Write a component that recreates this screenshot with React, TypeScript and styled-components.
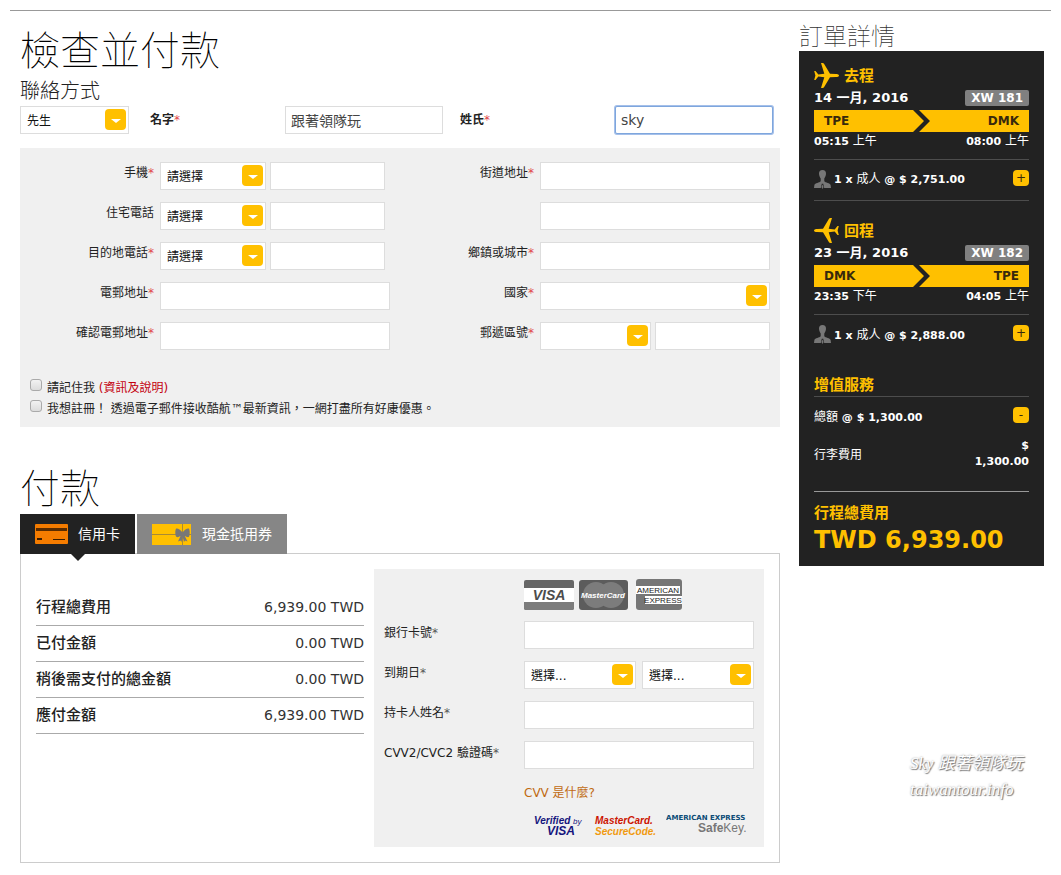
import React, { ReactNode } from "react";
import styled, { createGlobalStyle, css } from "styled-components";

const cjk = `"Noto Sans CJK TC", sans-serif`;
const wide = `"DejaVu Sans", ${cjk}`;
const yellow = "#ffc000";

const GlobalStyle = createGlobalStyle`
  *, *::before, *::after { box-sizing: border-box; }
  body {
    margin: 0;
    background: #fff;
    color: #222;
    font: 12px/20px ${wide};
  }
  h1, h2, h3, p { margin: 0; padding: 0; }
  button, input, select { font: inherit; color: inherit; }
  a { text-decoration: none; }
`;

/* ---------- page frame ---------- */

const Page = styled.div`
  padding: 10px 10px 12px;
`;
const Columns = styled.div`
  display: flex;
  align-items: flex-start;
  gap: 19px;
  padding: 12px 7px 0 10px;
  border-top: 1px solid #999;
`;
const Main = styled.main`
  flex: 1;
  min-width: 0;
`;
const Aside = styled.aside`
  flex: 0 0 245px;
`;
const PageTitle = styled.h1`
  padding-bottom: 3px;
  color: #000;
  font: 100 40px/50px ${cjk};
`;
const SubTitle = styled.h2`
  font: 300 20px/28px ${cjk};
`;
const AsideTitle = styled.h2`
  padding-bottom: 4px;
  font: 100 24px/24px ${cjk};
  color: #333;
`;

/* ---------- form controls ---------- */

const Input = styled.input<{ $grow?: boolean; $active?: boolean }>`
  height: 28px;
  width: ${(p) => (p.$grow ? "auto" : "100%")};
  flex: ${(p) => (p.$grow ? "1" : "0 1 auto")};
  min-width: 0;
  padding: 0 5px;
  border: 1px solid #ddd;
  background: #fff;
  color: #444;
  outline: none;
  ${(p) =>
    p.$active &&
    css`
      border-color: #7ea6dd;
      border-radius: 2px;
      box-shadow: 0 0 0 1px #a5c0ea;
    `}
`;
const SelectBox = styled.span<{ $width: string }>`
  position: relative;
  display: block;
  width: ${(p) => p.$width};
  flex: none;
  height: 28px;
`;
const NativeSelect = styled.select`
  appearance: none;
  width: 100%;
  height: 28px;
  padding: 1px 28px 0 6px;
  border: 1px solid #ddd;
  border-radius: 0;
  background: #fff;
  color: #111;
  font-size: 12px;
`;
const Caret = styled.span`
  position: absolute;
  top: 3px;
  right: 3px;
  width: 21px;
  height: 21px;
  border-radius: 4px;
  background: ${yellow};
  pointer-events: none;
  &::after {
    content: "";
    position: absolute;
    left: 6px;
    top: 10px;
    border: 5px solid transparent;
    border-top: 4px solid #fff;
    border-bottom: 0;
  }
`;
function Select({ id, label, width, value = "" }: { id: string; label?: string; width: string; value?: string }) {
  return (
    <SelectBox $width={width}>
      <NativeSelect id={id} aria-label={label} defaultValue={value}>
        <option value={value}>{value}</option>
      </NativeSelect>
      <Caret />
    </SelectBox>
  );
}

const Star = styled.span<{ $red?: boolean }>`
  color: ${(p) => (p.$red ? "#e0454a" : "#555")};
  font-weight: 400;
`;

/* ---------- passenger name row ---------- */

const NameGrid = styled.div`
  display: grid;
  grid-template-columns: 109px 156px 158px 172px 158px;
  align-items: center;
  padding-top: 2px;
  font-size: 14px;
`;
const NameLabel = styled.label<{ $indent: number }>`
  padding-left: ${(p) => p.$indent}px;
  font-size: 12px;
  font-weight: 700;
`;

/* ---------- contact panel ---------- */

const ContactPanel = styled.section`
  margin-top: 14px;
  padding: 14px 10px 7px 0;
  background: #f0f0f0;
`;
const ContactColumns = styled.div`
  display: flex;
  justify-content: space-between;
`;
const FieldColumn = styled.div`
  display: grid;
  grid-template-columns: 134px 230px;
  column-gap: 6px;
  row-gap: 12px;
`;
const FieldLabel = styled.label`
  padding-top: 1px;
  text-align: right;
`;
const FieldRow = styled.div`
  display: flex;
  gap: 4px;
  width: 230px;
`;
const PhoneInput = styled(Input)`
  width: 115px;
`;
const Checks = styled.div`
  padding: 28px 0 0 10px;
`;
const CheckLine = styled.label`
  display: flex;
  align-items: flex-start;
  gap: 4px;
  line-height: 21px;
`;
const CheckInput = styled.input`
  appearance: none;
  flex: none;
  width: 12px;
  height: 12px;
  margin: 1px 1px 0 0;
  border: 1px solid #aaa;
  border-radius: 3px;
  background: linear-gradient(#f2f2f2, #dcdcdc);
`;
const InfoLink = styled.a`
  color: #c4000f;
`;

/* ---------- payment ---------- */

const PayTitle = styled(PageTitle)`
  margin-top: 34px;
`;
const Tabs = styled.div`
  display: flex;
  gap: 2px;
`;
const Tab = styled.button<{ $active?: boolean }>`
  position: relative;
  display: flex;
  align-items: center;
  gap: 10px;
  height: 40px;
  padding: 0 15px;
  border: 0;
  background: ${(p) => (p.$active ? "#222" : "#868686")};
  color: #fff;
  font-size: 14px;
  line-height: 20px;
  ${(p) =>
    p.$active &&
    css`
      &::after {
        content: "";
        position: absolute;
        z-index: 1;
        top: 100%;
        left: 50%;
        margin-left: -7px;
        border: 7px solid transparent;
        border-top-color: #222;
        border-bottom: 0;
      }
    `}
`;
const PayPanel = styled.div`
  display: flex;
  align-items: flex-start;
  gap: 10px;
  margin-top: -1px;
  padding: 15px;
  border: 1px solid #ccc;
`;
const Costs = styled.table`
  flex: 1;
  margin-top: 20px;
  border-collapse: collapse;
  line-height: 20px;
  th, td { height: 36px; padding: 0; border-bottom: 1px solid #aaa; }
  th { text-align: left; font-size: 15px; font-weight: 500; }
  td { text-align: right; font-size: 14px; color: #333; }
`;
const CardBox = styled.div`
  flex: 0 0 390px;
  padding: 10px;
  background: #f0f0f0;
`;
const CardGrid = styled.div`
  display: grid;
  grid-template-columns: 140px 230px;
  row-gap: 12px;
  margin-top: 11px;
`;
const CardLabel = styled.label`
  padding-top: 2px;
`;
const Pair = styled.div`
  display: flex;
  justify-content: space-between;
`;
const CardLogos = styled.div`
  display: flex;
  gap: 5px;
  margin-left: 140px;
`;
const CvvLink = styled.a`
  display: block;
  margin: 14px 0 0 140px;
  color: #c06a10;
`;
const SecureLogos = styled.div`
  display: flex;
  gap: 10px;
  height: 23px;
  margin: 11px 0 0 150px;
`;

/* ---------- itinerary ---------- */

const Order = styled.div`
  padding: 11px 15px 10px;
  background: #222;
  color: #fff;
  font: 700 11px/16px ${wide};
`;
const Leg = styled.section`
  height: 155px;
`;
const LegHead = styled.h3`
  display: flex;
  align-items: center;
  gap: 5px;
  height: 26px;
  color: ${yellow};
  font: 700 15px/24px ${cjk};
`;
const Split = styled.div`
  display: flex;
  justify-content: space-between;
  align-items: center;
`;
const DateRow = styled(Split)`
  height: 18px;
  margin-top: 1px;
  font-size: 13px;
`;
const FlightNo = styled.span`
  padding: 0 6px;
  border-radius: 2px;
  background: #808080;
  font-size: 12px;
`;
const Route = styled(Split)`
  position: relative;
  height: 22px;
  margin-top: 3px;
  padding: 0 10px;
  background: ${yellow};
  color: #38290c;
  font-size: 12px;
`;
const Chevron = styled.svg`
  position: absolute;
  top: 0;
  left: 99px;
`;
const Light = styled.span`
  font: 400 12px/16px ${cjk};
`;
const Pax = styled(Split)<{ $last?: boolean }>`
  height: 42px;
  margin-top: 9px;
  padding-bottom: 2px;
  border-top: 1px solid #4d4d4d;
  border-bottom: ${(p) => (p.$last ? "0" : "1px solid #4d4d4d")};
`;
const PaxText = styled.span`
  display: flex;
  align-items: center;
  gap: 3px;
`;
const Toggle = styled.button`
  width: 16px;
  height: 16px;
  margin-bottom: 3px;
  padding: 0;
  border: 0;
  border-radius: 4px;
  background: ${yellow};
  color: #38290c;
  font: 12px/14px ${wide};
`;
const Heading = styled.h3`
  color: ${yellow};
  font: 700 15px/24px ${cjk};
`;
const Extras = styled.section`
  height: 120px;
  border-bottom: 1px solid #999;
`;
const ExtrasTotal = styled(Split)`
  height: 40px;
  border-top: 1px solid #4d4d4d;
`;
const BagFee = styled(Split)`
  padding-top: 2px;
`;
const Fee = styled.span`
  width: 60px;
  text-align: right;
`;
const TotalHeading = styled(Heading)`
  margin-top: 8px;
`;
const Total = styled.p`
  color: ${yellow};
  font-size: 24px;
  line-height: 32px;
`;
const Signature = styled.footer`
  margin: 185px 0 0 111px;
  color: #fff;
  font: italic 17px/26px "Liberation Serif", "Noto Sans CJK TC", serif;
  white-space: nowrap;
  text-shadow: 1px 1px 1px #777, 0 0 2px #999;
`;

/* ---------- drawings ---------- */

const Plane = ({ back }: { back?: boolean }) => (
  <svg width="25" height="25" viewBox="0 0 25 25" aria-hidden="true">
    <path
      transform={back ? "matrix(-1 0 0 1 25 0)" : undefined}
      fill={yellow}
      d="M25 12.5C25 11.500 23.400 11 22 11L16 10.800L10 .8Q9.600 0 8.600 0L7 0L10.300 10.800L4.300 11.400L1.500 8L.2 8L1.400 12.500L.2 17L1.500 17L4.300 13.600L10.300 14.200L7 25L8.600 25Q9.600 25 10 24.200L16 14.200L22 14C23.400 14 25 13.500 25 12.500Z"
    />
  </svg>
);
const Person = () => (
  <svg width="17" height="19" viewBox="0 0 17 19" aria-hidden="true">
    <path
      fill="#777"
      d="M8.500 0C10.800 0 12.200 1.600 12 4C11.800 6.200 10.800 7.600 10.300 8.600L10.300 11.200C11.500 12.600 16 13 16.600 15L17 18L10.200 18L9.200 13.800L7.800 13.800L6.800 18L0 18L.4 15C1 13 5.500 12.600 6.700 11.200L6.700 8.600C6.200 7.600 5.200 6.200 5 4C4.800 1.600 6.200 0 8.500 0Z"
    />
    <path fill="#777" d="M8.500 14.500L9.600 17L8.500 19L7.400 17Z" />
  </svg>
);
const CardIcon = () => (
  <svg width="33" height="20" viewBox="0 0 33 20" aria-hidden="true">
    <rect width="33" height="20" rx="1" fill="#f57c00" />
    <path d="M1 4h31v3H1z" fill="#5a2c00" />
    <path d="M2 14h5v2H2zM18 15h12v1H18z" fill="#3a1c00" />
  </svg>
);
const GiftIcon = () => (
  <svg width="40" height="21" viewBox="0 0 40 21" aria-hidden="true">
    <rect width="39" height="21" fill={yellow} />
    <path d="M0 10h39v1H0zM30 0h1v21h-1z" fill="#a98a35" />
    <path
      fill="#777"
      d="M30.500 8.500C28 5 25 3.800 24 4.800C23 6 23 12 24.500 13C26 13.500 27.500 12.500 28.500 12L26 17.500L28.500 16.500L29.500 18L30.700 13L32 18L33 16.500L35.500 17.500L32.800 12C34 12.500 35.500 13.500 36.800 13C38 12 38 6 37 4.800C36 3.800 33 5 30.500 8.500Z"
    />
  </svg>
);
const sans = `"Liberation Sans", sans-serif`;

const VisaLogo = () => (
  <svg width="50" height="31" viewBox="0 0 50 31" role="img" aria-label="VISA">
    <rect y="1" width="50" height="30" rx="2" fill="#666" />
    <path d="M0 23h50v6a2 2 0 0 1-2 2H2a2 2 0 0 1-2-2z" fill="#7c7c7c" />
    <rect y="9" width="50" height="14" fill="#fff" />
    <text x="25" y="21" textAnchor="middle" fontFamily={sans} fontSize="14" fontWeight="700" fontStyle="italic" fill="#4c4c4c">VISA</text>
  </svg>
);
const MasterLogo = () => (
  <svg width="49" height="31" viewBox="0 0 49 31" role="img" aria-label="MasterCard">
    <rect y="1" width="49" height="30" rx="3" fill="#5c5c5c" />
    <circle cx="17" cy="16" r="13" fill="#7c7c7c" />
    <circle cx="32" cy="16" r="13" fill="#7c7c7c" />
    <text x="24" y="19" textAnchor="middle" fontFamily={sans} fontSize="8" fontWeight="700" fontStyle="italic" fill="#fff">MasterCard</text>
  </svg>
);
const AmexLogo = () => (
  <svg width="49" height="31" viewBox="-3 0 49 31" role="img" aria-label="American Express">
    <rect width="46" height="31" rx="3" fill="#767676" />
    <path d="M0 7h44v8H0zM9 17h37v8H9z" fill="#fff" />
    <text x="22" y="14" textAnchor="middle" fontFamily={sans} fontSize="8" fill="#222">AMERICAN</text>
    <text x="27" y="24" textAnchor="middle" fontFamily={sans} fontSize="8" fill="#222">EXPRESS</text>
  </svg>
);
const VerifiedLogo = () => (
  <svg width="50" height="23" viewBox="0 0 50 23" role="img" aria-label="Verified by VISA" fill="#15157d" fontStyle="italic">
    <text x="0" y="10" fontFamily={sans} fontSize="10" fontWeight="700">Verified</text>
    <text x="39" y="10" fontFamily={sans} fontSize="8">by</text>
    <text x="13" y="21" fontFamily={sans} fontSize="12" fontWeight="700">VISA</text>
  </svg>
);
const SecureCodeLogo = () => (
  <svg width="62" height="23" viewBox="0 0 62 23" role="img" aria-label="MasterCard SecureCode" fontFamily={sans} fontSize="10" fontWeight="700" fontStyle="italic">
    <text x="1" y="10" fill="#cc1400">MasterCard.</text>
    <text x="1" y="21" fill="#f09a10">SecureCode.</text>
  </svg>
);
const SafeKeyLogo = () => (
  <svg width="84" height="23" viewBox="0 0 84 23" role="img" aria-label="American Express SafeKey">
    <text x="0" y="6" fontFamily={wide} fontSize="7" fontWeight="700" fill="#0a4a75">AMERICAN EXPRESS</text>
    <text x="32" y="18" fontFamily={sans} fontSize="12" fill="#777">
      <tspan fontWeight="700">Safe</tspan>Key.
    </text>
  </svg>
);

/* ---------- composed parts ---------- */

function Labelled({ id, text, required = true, children }: { id: string; text: string; required?: boolean; children: ReactNode }) {
  return (
    <>
      <FieldLabel htmlFor={id}>
        {text}
        {required && <Star $red>*</Star>}
      </FieldLabel>
      <FieldRow>{children}</FieldRow>
    </>
  );
}

interface LegProps {
  back?: boolean;
  title: string;
  day: string;
  flight: string;
  from: string;
  to: string;
  dep: [string, string];
  arr: [string, string];
  price: string;
}
function FlightLeg({ back, title, day, flight, from, to, dep, arr, price }: LegProps) {
  return (
    <Leg>
      <LegHead>
        <Plane back={back} />
        {title}
      </LegHead>
      <DateRow>
        <span>{day} 一月, 2016</span>
        <FlightNo>{flight}</FlightNo>
      </DateRow>
      <Route>
        <span>{from}</span>
        <Chevron width="18" height="22" viewBox="0 0 18 22" aria-hidden="true">
          <path d="M0 0H6L17 11L6 22H0L11 11Z" fill="#222" />
        </Chevron>
        <span>{to}</span>
      </Route>
      <Split>
        <span>{dep[0]} <Light>{dep[1]}</Light></span>
        <span>{arr[0]} <Light>{arr[1]}</Light></span>
      </Split>
      <Pax $last={back}>
        <PaxText>
          <Person />
          <span>1 x <Light>成人</Light> @ $ {price}</span>
        </PaxText>
        <Toggle type="button" aria-label="展開">+</Toggle>
      </Pax>
    </Leg>
  );
}

const costs = [
  ["行程總費用", "6,939.00 TWD"],
  ["已付金額", "0.00 TWD"],
  ["稍後需支付的總金額", "0.00 TWD"],
  ["應付金額", "6,939.00 TWD"],
];

export default function App() {
  return (
    <Page>
      <GlobalStyle />
      <Columns>
        <Main>
          <PageTitle>檢查並付款</PageTitle>
          <SubTitle>聯絡方式</SubTitle>
          <NameGrid>
            <Select id="title" label="稱謂" width="100%" value="先生" />
            <NameLabel htmlFor="given" $indent={21}>名字<Star $red>*</Star></NameLabel>
            <Input id="given" defaultValue="跟著領隊玩" />
            <NameLabel htmlFor="family" $indent={17}>姓氏<Star $red>*</Star></NameLabel>
            <Input id="family" defaultValue="sky" $active />
          </NameGrid>

          <ContactPanel>
            <ContactColumns>
              <FieldColumn>
                <Labelled id="mobile" text="手機">
                  <Select id="mobile" width="106px" value="請選擇" />
                  <PhoneInput aria-label="手機號碼" />
                </Labelled>
                <Labelled id="home" text="住宅電話" required={false}>
                  <Select id="home" width="106px" value="請選擇" />
                  <PhoneInput aria-label="住宅電話號碼" />
                </Labelled>
                <Labelled id="dest" text="目的地電話">
                  <Select id="dest" width="106px" value="請選擇" />
                  <PhoneInput aria-label="目的地電話號碼" />
                </Labelled>
                <Labelled id="email" text="電郵地址">
                  <Input id="email" type="email" />
                </Labelled>
                <Labelled id="email2" text="確認電郵地址">
                  <Input id="email2" type="email" />
                </Labelled>
              </FieldColumn>
              <FieldColumn>
                <Labelled id="street" text="街道地址">
                  <Input id="street" />
                </Labelled>
                <Labelled id="street2" text="" required={false}>
                  <Input id="street2" aria-label="街道地址 2" />
                </Labelled>
                <Labelled id="city" text="鄉鎮或城市">
                  <Input id="city" />
                </Labelled>
                <Labelled id="country" text="國家">
                  <Select id="country" width="100%" />
                </Labelled>
                <Labelled id="zip" text="郵遞區號">
                  <Select id="zip" width="111px" />
                  <Input aria-label="郵遞區號號碼" $grow />
                </Labelled>
              </FieldColumn>
            </ContactColumns>
            <Checks>
              <CheckLine>
                <CheckInput type="checkbox" />
                <span>請記住我 <InfoLink href="#info">(資訊及說明)</InfoLink></span>
              </CheckLine>
              <CheckLine>
                <CheckInput type="checkbox" />
                <span>我想註冊！ 透過電子郵件接收酷航™最新資訊，一網打盡所有好康優惠。</span>
              </CheckLine>
            </Checks>
          </ContactPanel>

          <PayTitle as="h2">付款</PayTitle>
          <Tabs role="tablist">
            <Tab type="button" role="tab" aria-selected="true" $active>
              <CardIcon />
              信用卡
            </Tab>
            <Tab type="button" role="tab" aria-selected="false">
              <GiftIcon />
              現金抵用券
            </Tab>
          </Tabs>
          <PayPanel>
            <Costs>
              <tbody>
                {costs.map(([name, amount]) => (
                  <tr key={name}>
                    <th scope="row">{name}</th>
                    <td>{amount}</td>
                  </tr>
                ))}
              </tbody>
            </Costs>
            <CardBox>
              <CardLogos>
                <VisaLogo />
                <MasterLogo />
                <AmexLogo />
              </CardLogos>
              <CardGrid>
                <CardLabel htmlFor="cardno">銀行卡號<Star>*</Star></CardLabel>
                <Input id="cardno" />
                <CardLabel htmlFor="month">到期日<Star>*</Star></CardLabel>
                <Pair>
                  <Select id="month" width="112px" value="選擇..." />
                  <Select id="year" label="到期年" width="112px" value="選擇..." />
                </Pair>
                <CardLabel htmlFor="holder">持卡人姓名<Star>*</Star></CardLabel>
                <Input id="holder" />
                <CardLabel htmlFor="cvv">CVV2/CVC2 驗證碼<Star>*</Star></CardLabel>
                <Input id="cvv" />
              </CardGrid>
              <CvvLink href="#cvv-help">CVV 是什麼?</CvvLink>
              <SecureLogos>
                <VerifiedLogo />
                <SecureCodeLogo />
                <SafeKeyLogo />
              </SecureLogos>
            </CardBox>
          </PayPanel>
        </Main>

        <Aside>
          <AsideTitle>訂單詳情</AsideTitle>
          <Order>
            <FlightLeg title="去程" day="14" flight="XW 181" from="TPE" to="DMK" dep={["05:15", "上午"]} arr={["08:00", "上午"]} price="2,751.00" />
            <FlightLeg back title="回程" day="23" flight="XW 182" from="DMK" to="TPE" dep={["23:35", "下午"]} arr={["04:05", "上午"]} price="2,888.00" />
            <Extras>
              <Heading>增值服務</Heading>
              <ExtrasTotal>
                <span><Light>總額</Light> @ $ 1,300.00</span>
                <Toggle type="button" aria-label="收合">-</Toggle>
              </ExtrasTotal>
              <BagFee>
                <Light>行李費用</Light>
                <Fee>$ 1,300.00</Fee>
              </BagFee>
            </Extras>
            <TotalHeading>行程總費用</TotalHeading>
            <Total>TWD 6,939.00</Total>
          </Order>
          <Signature>
            Sky 跟著領隊玩
            <br />
            taiwantour.info
          </Signature>
        </Aside>
      </Columns>
    </Page>
  );
}
